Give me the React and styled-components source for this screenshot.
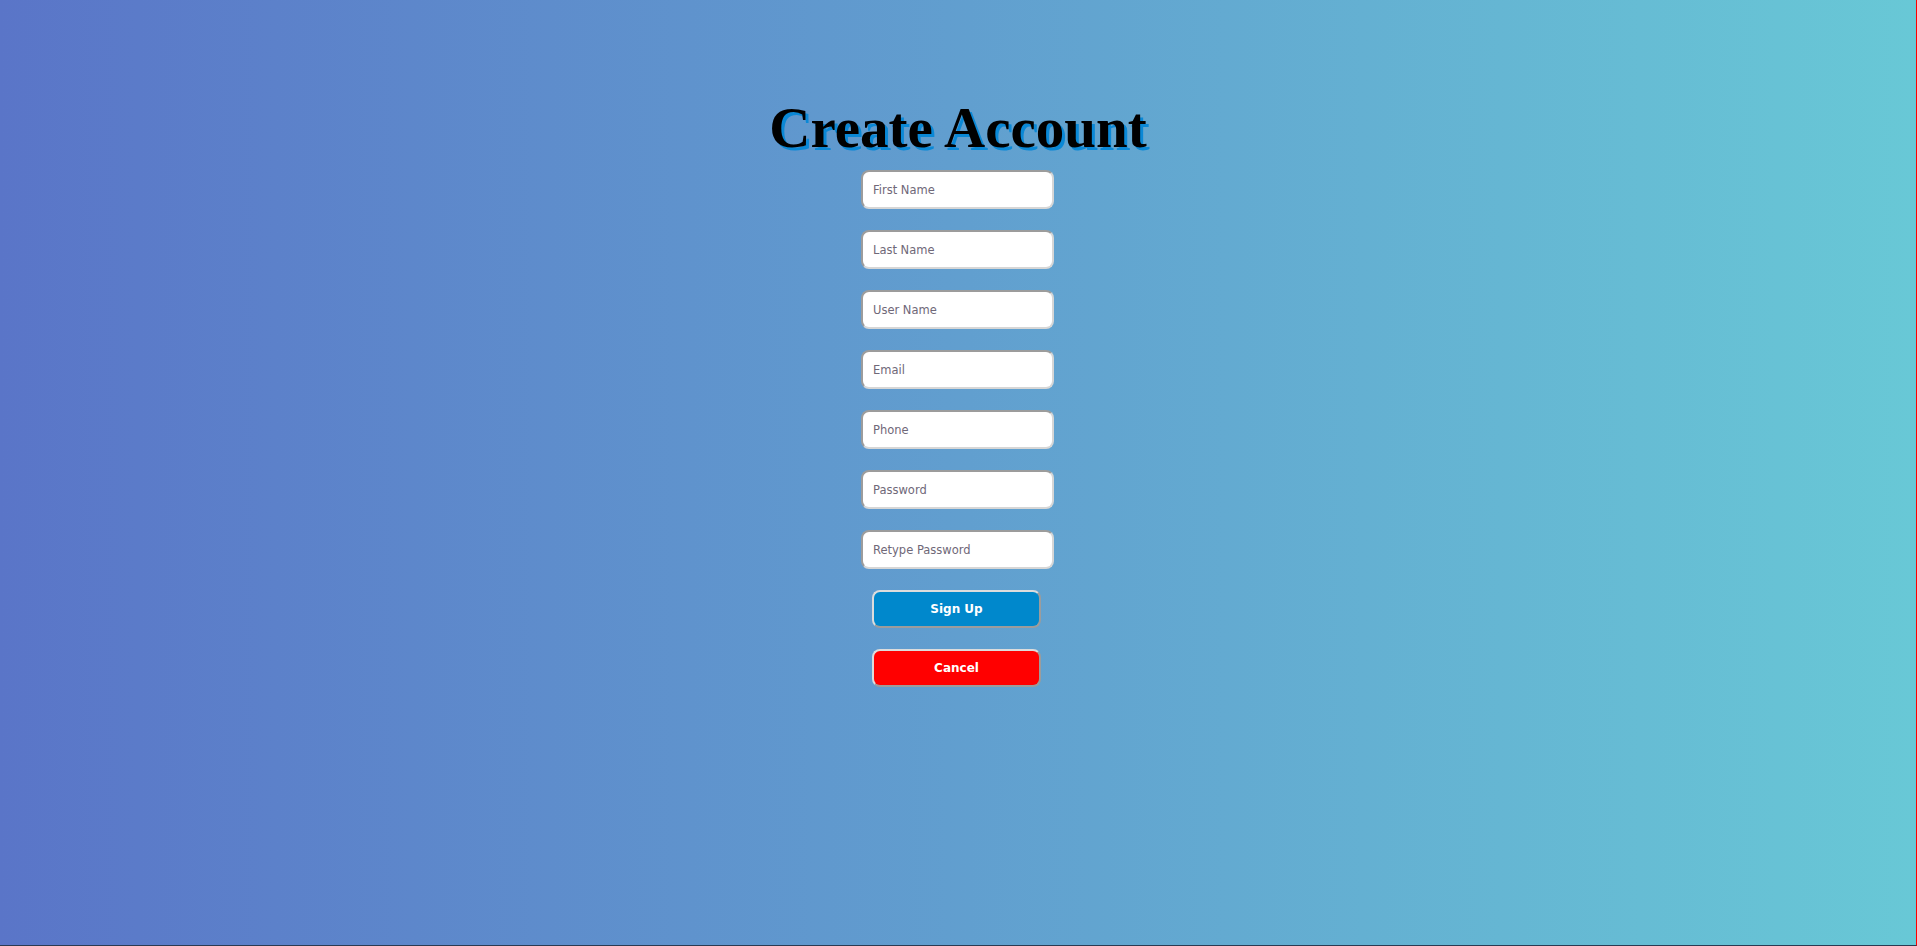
import styled, { createGlobalStyle } from "styled-components";

const Global = createGlobalStyle`
  html, body {
    margin: 0;
    padding: 0;
  }
  body {
    font-family: "DejaVu Sans", Tahoma, sans-serif;
  }
`;

const Pagina = styled.div`
  box-sizing: border-box;
  height: 946px;
  background: linear-gradient(to right, #5a75c8, #68c8d6);
  border-right: 1px solid #ff0000;
  border-bottom: 1px solid #2b3a52;
  display: flex;
  flex-direction: column;
  align-items: center;
  padding-top: 95px;
`;

const Titulo = styled.h1`
  font-family: "Liberation Serif", "Times New Roman", serif;
  font-size: 57px;
  font-weight: bold;
  color: #000;
  text-shadow: 3px 3px 0 #0a88d6;
  margin: 0 0 10px 0;
  line-height: 65px;
`;

const Formulario = styled.form`
  display: flex;
  flex-direction: column;
  align-items: center;
  gap: 21px;
`;

const Campo = styled.input`
  box-sizing: border-box;
  width: 193px;
  height: 39px;
  margin-right: 1px;
  border: 2px solid;
  border-color: #9c9c9c #d6d6d6 #d6d6d6 #9c9c9c;
  border-radius: 8px;
  background: #fff;
  padding: 0 10px;
  font-family: "DejaVu Sans", Tahoma, sans-serif;
  font-size: 11.5px;
  outline: none;
  &::placeholder {
    color: #6f6878;
  }
`;

const Botao = styled.button`
  box-sizing: border-box;
  width: 169px;
  height: 38px;
  margin-right: 3px;
  border: 2px solid;
  border-color: #dcdcdc #9c9c9c #9c9c9c #dcdcdc;
  border-radius: 8px;
  background: ${(p) => (p.$perigo ? "#ff0000" : "#0088cc")};
  color: #fff;
  font-family: "DejaVu Sans", Tahoma, sans-serif;
  font-size: 12px;
  font-weight: bold;
  cursor: pointer;
`;

const campos = [
  { nome: "firstName", rotulo: "First Name", tipo: "text" },
  { nome: "lastName", rotulo: "Last Name", tipo: "text" },
  { nome: "userName", rotulo: "User Name", tipo: "text" },
  { nome: "email", rotulo: "Email", tipo: "email" },
  { nome: "phone", rotulo: "Phone", tipo: "tel" },
  { nome: "password", rotulo: "Password", tipo: "password" },
  { nome: "retype", rotulo: "Retype Password", tipo: "password" },
];

export default function App() {
  return (
    <>
      <Global />
      <Pagina>
        <Titulo>Create Account</Titulo>
        <Formulario onSubmit={(e) => e.preventDefault()}>
          {campos.map((c) => (
            <Campo key={c.nome} name={c.nome} type={c.tipo} placeholder={c.rotulo} />
          ))}
          <Botao type="submit">Sign Up</Botao>
          <Botao type="button" $perigo>
            Cancel
          </Botao>
        </Formulario>
      </Pagina>
    </>
  );
}
